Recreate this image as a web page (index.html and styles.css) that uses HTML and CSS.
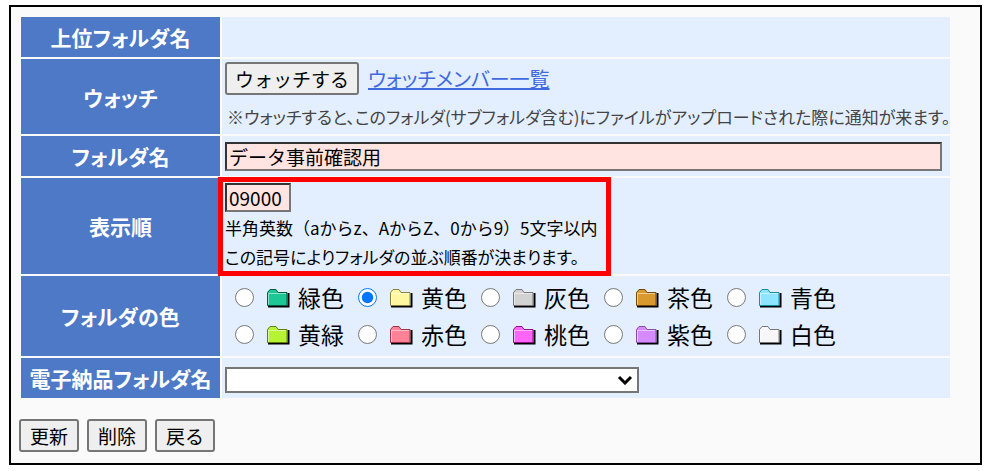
FILE: index.html
```html
<!DOCTYPE html>
<html lang="ja">
<head>
<meta charset="utf-8">
<meta name="viewport" content="width=device-width, initial-scale=1">
<title>フォルダ</title>
<link rel="stylesheet" href="styles.css">
</head>
<body>
<svg class="defs" aria-hidden="true">
  <symbol id="folder" viewBox="0 0 24 20">
    <path d="M2 18.500H22.500V5" fill="none" stroke="#000" stroke-width="2"/>
    <path class="body" d="M1.500 17.500V4.500L4 1.500H10L12 4.500H21V17.500Z" stroke-width="1" stroke-linejoin="round"/>
    <path d="M2.500 16.500V5.500H20" fill="none" stroke="#fff" stroke-opacity=".5" stroke-width="1"/>
  </symbol>
</svg>
<main class="panel">
<form>
  <table class="form-table">
    <colgroup><col class="heading"><col></colgroup>
    <tr><th scope="row">上位フォルダ名</th><td></td></tr>
    <tr>
      <th scope="row">ウォッチ</th>
      <td>
        <div class="watch"><button type="button">ウォッチする</button><a href="#">ウォッチメンバー一覧</a></div>
        <p class="note">※ウォッチすると、このフォルダ(サブフォルダ含む)にファイルがアップロードされた際に通知が来ます。</p>
      </td>
    </tr>
    <tr>
      <th scope="row"><label for="name">フォルダ名</label></th>
      <td><input class="text name" id="name" type="text" value="データ事前確認用"></td>
    </tr>
    <tr>
      <th scope="row"><label for="order">表示順</label></th>
      <td>
        <div class="highlight">
          <input class="text order" id="order" type="text" maxlength="5" value="09000">
          <p class="hint range">半角英数（aからz、AからZ、0から9）5文字以内</p>
          <p class="hint">この記号によりフォルダの並ぶ順番が決まります。</p>
        </div>
      </td>
    </tr>
    <tr>
      <th scope="row">フォルダの色</th>
      <td>
        <div class="colors">
          <label><input type="radio" name="color"><svg class="folder green"><use href="#folder"/></svg>緑色</label>
          <label><input type="radio" name="color" checked><svg class="folder yellow"><use href="#folder"/></svg>黄色</label>
          <label><input type="radio" name="color"><svg class="folder gray"><use href="#folder"/></svg>灰色</label>
          <label><input type="radio" name="color"><svg class="folder brown"><use href="#folder"/></svg>茶色</label>
          <label><input type="radio" name="color"><svg class="folder blue"><use href="#folder"/></svg>青色</label>
          <label><input type="radio" name="color"><svg class="folder lime"><use href="#folder"/></svg>黄緑</label>
          <label><input type="radio" name="color"><svg class="folder red"><use href="#folder"/></svg>赤色</label>
          <label><input type="radio" name="color"><svg class="folder pink"><use href="#folder"/></svg>桃色</label>
          <label><input type="radio" name="color"><svg class="folder purple"><use href="#folder"/></svg>紫色</label>
          <label><input type="radio" name="color"><svg class="folder white"><use href="#folder"/></svg>白色</label>
        </div>
      </td>
    </tr>
    <tr>
      <th scope="row"><label for="delivery">電子納品フォルダ名</label></th>
      <td>
        <div class="select">
          <select id="delivery"><option></option></select>
          <svg class="arrow" viewBox="0 0 16 10" aria-hidden="true"><path d="M2 2L8 8L14 2" fill="none" stroke="#000" stroke-width="3"/></svg>
        </div>
      </td>
    </tr>
  </table>
  <div class="actions">
    <button type="button">更新</button>
    <button type="button">削除</button>
    <button type="button">戻る</button>
  </div>
</form>
</main>
</body>
</html>
```
FILE: styles.css
```css
* { box-sizing: border-box; }

body {
  margin: 0;
  padding: 5px 8px 8px 9px;
  background: #fff;
  color: #000;
  font: 17px/29px "Noto Sans CJK JP", sans-serif;
}

.defs { position: absolute; width: 0; height: 0; }

.panel {
  border: 2px solid #000;
  background: #fafafa;
  padding: 8px 28px 11px 8px;
}

.form-table {
  width: 100%;
  table-layout: fixed;
  border-spacing: 2px;
  font-feature-settings: "palt";
}

.heading { width: 199px; }

th {
  height: 40px;
  padding: 0;
  background: #4d79c7;
  color: #fff;
  font-size: 21px;
  font-weight: 700;
  line-height: 30px;
  white-space: nowrap;
}

td {
  padding: 3px 0 3px 3px;
  background: #e3efff;
}

p { margin: 0; }

button {
  height: 33px;
  padding: 0 8px;
  border: 2px solid #767676;
  border-radius: 3px;
  background: #efefef;
  color: #000;
  font: 19px/27px "Noto Sans CJK JP", sans-serif;
}

.watch { display: flex; align-items: center; gap: 9px; }

a {
  color: #4169e1;
  font-size: 20px;
  text-decoration-thickness: 2px;
}

.note {
  padding-top: 7px;
  padding-left: 2px;
  color: #444;
  white-space: nowrap;
}

.text {
  display: block;
  height: 29px;
  padding: 0 2px;
  border: 2px solid #767676;
  border-top-color: #333;
  border-left-color: #333;
  background: #ffe4e1;
  color: #000;
  font: 19px/25px "Noto Sans CJK JP", sans-serif;
}

.name { width: calc(100% - 8px); }
.order { width: 66px; margin-bottom: 1px; }

.highlight {
  position: relative;
  width: fit-content;
  padding: 2px 8px 0 0;
  white-space: nowrap;
}

.highlight::after {
  content: "";
  position: absolute;
  inset: -4px -5px -5px -7px;
  border: 5px solid #f00;
  pointer-events: none;
}

.range { font-feature-settings: normal; }

.colors {
  display: grid;
  grid-template-columns: repeat(5, 123px);
  padding-left: 10px;
  font-size: 23px;
  line-height: 37px;
}

.colors label { display: flex; align-items: center; white-space: nowrap; }

input[type="radio"] { width: 19px; height: 19px; margin: 0 12px 0 0; }

.folder { width: 24px; height: 20px; margin-right: 8px; }
.green { fill: #1cc795; stroke: #075a42; }
.yellow { fill: #fff8a0; stroke: #8c8240; }
.gray { fill: #d2d2d2; stroke: #777; }
.brown { fill: #d9992e; stroke: #75480a; }
.blue { fill: #8ee5ff; stroke: #168cad; }
.lime { fill: #b6f433; stroke: #607e12; }
.red { fill: #ff8196; stroke: #9e3146; }
.pink { fill: #ff65f8; stroke: #8f128b; }
.purple { fill: #d58aff; stroke: #8650a0; }
.white { fill: #f7f7f7; stroke: #777; }

.select { position: relative; width: 414px; padding-top: 3px; }

select {
  display: block;
  width: 100%;
  height: 26px;
  border: 2px solid #767676;
  border-radius: 0;
  background: #fff;
  appearance: none;
}

.arrow {
  position: absolute;
  bottom: 8px;
  right: 6px;
  width: 16px;
  height: 10px;
  pointer-events: none;
}

.actions { display: flex; gap: 8px; padding-top: 19px; }
.actions button { padding: 0 9px; }
```
